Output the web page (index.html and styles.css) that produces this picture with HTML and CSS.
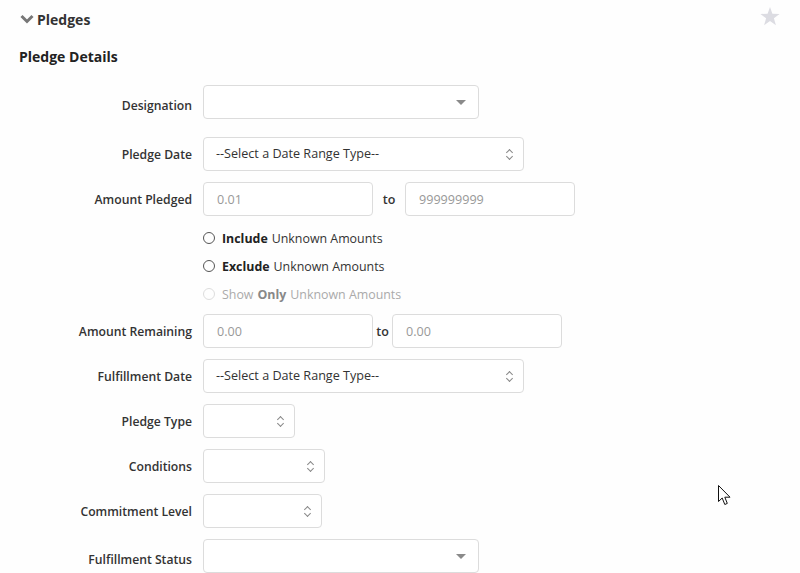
FILE: index.html
```html
<!DOCTYPE html>
<html lang="en">

<head>
    <meta charset="UTF-8">
    <meta name="viewport" content="width=device-width, initial-scale=1.0">
    <title>Pledges</title>
    <link rel="stylesheet" href="styles.css">
</head>

<body>

    <div class="panel">
        <div class="panel-head">
            <svg class="chevron" width="14" height="10" viewBox="0 0 14 10">
                <path d="M1.5 2 L7 7.5 L12.5 2" fill="none" stroke="#777" stroke-width="3" />
            </svg>
            <span class="panel-title">Pledges</span>
            <svg class="star" width="20" height="19" viewBox="0 0 20 19">
                <path d="M10 0 L12.4 6.8 L19.6 6.9 L13.9 11.3 L15.9 18.2 L10 14.1 L4.1 18.2 L6.1 11.3 L0.4 6.9 L7.6 6.8 Z" fill="#dcdce2" />
            </svg>
        </div>

        <h2 class="section-title">Pledge Details</h2>

        <div class="form">
            <div class="row row-first">
                <label class="label label-s2">Designation</label>
                <div class="select2 w-276"><span class="caret"></span></div>
            </div>

            <div class="row">
                <label class="label">Pledge Date</label>
                <div class="select w-321">--Select a Date Range Type--<span class="updown"></span></div>
            </div>

            <div class="row">
                <label class="label">Amount Pledged</label>
                <input class="input" type="text" placeholder="0.01">
                <span class="to to-wide">to</span>
                <input class="input" type="text" placeholder="999999999">
            </div>

            <div class="radios">
                <div class="radio"><span class="dot"></span><b>Include</b> Unknown Amounts</div>
                <div class="radio"><span class="dot"></span><b>Exclude</b> Unknown Amounts</div>
                <div class="radio disabled"><span class="dot"></span>Show <b>Only</b> Unknown Amounts</div>
            </div>

            <div class="row">
                <label class="label">Amount Remaining</label>
                <input class="input" type="text" placeholder="0.00">
                <span class="to">to</span>
                <input class="input" type="text" placeholder="0.00">
            </div>

            <div class="row">
                <label class="label">Fulfillment Date</label>
                <div class="select w-321">--Select a Date Range Type--<span class="updown"></span></div>
            </div>

            <div class="row">
                <label class="label">Pledge Type</label>
                <div class="select w-92"><span class="updown"></span></div>
            </div>

            <div class="row">
                <label class="label">Conditions</label>
                <div class="select w-122"><span class="updown"></span></div>
            </div>

            <div class="row">
                <label class="label">Commitment Level</label>
                <div class="select w-119"><span class="updown"></span></div>
            </div>

            <div class="row">
                <label class="label label-s2">Fulfillment Status</label>
                <div class="select2 w-276"><span class="caret"></span></div>
            </div>
        </div>
    </div>

    <!-- mouse pointer in the capture -->
    <svg class="cursor" width="14" height="22" viewBox="0 0 14 22">
        <path d="M0.5 0.5 L0.5 16.5 L4.2 13 L6.8 19.5 L9.3 18.4 L6.8 12.2 L12 12.2 Z" fill="#fff" stroke="#111" stroke-width="1" stroke-linejoin="round" />
    </svg>

</body>

</html>
```

FILE: styles.css
```css
/* reset START */
* {
    margin: 0;
    padding: 0;
    box-sizing: border-box;
}

body {
    font-family: "Open Sans", "Noto Sans", sans-serif;
    font-size: 12.5px;
    color: #333333;
    background-color: #fefefe;
    overflow: hidden;
}

/* reset END */

/* panel START */
.panel {
    position: relative;
    padding: 9px 0 0 19px;
}

.panel-head {
    display: flex;
    align-items: center;
    height: 20px;
}

.chevron {
    margin-left: 1px;
    margin-right: 3px;
}

.panel-title {
    font-size: 14px;
    font-weight: 700;
    color: #333333;
}

.star {
    position: absolute;
    top: 7px;
    right: 20px;
}

.section-title {
    margin-top: 17px;
    font-size: 14px;
    font-weight: 700;
    color: #222222;
    line-height: 22px;
}

/* panel END */

/* form START */
.form {
    margin-top: 17px;
    margin-left: -19px;
}

.row {
    display: flex;
    align-items: flex-start;
    margin-bottom: 11px;
}

.row-first {
    margin-bottom: 18px;
}

.label {
    width: 192px;
    margin-right: 11px;
    padding-top: 8px;
    line-height: 20px;
    text-align: right;
    font-size: 12.2px;
    font-weight: 600;
    color: #333333;
}

.label-s2 {
    padding-top: 11px;
}

.input,
.select,
.select2 {
    position: relative;
    height: 34px;
    border: 1px solid #dcdcdc;
    border-radius: 4px;
    background-color: #ffffff;
    font-family: inherit;
    font-size: 12.6px;
}

.input {
    width: 170px;
    padding: 0 13px;
    color: #333333;
    outline: none;
}

.input::placeholder {
    color: #999999;
}

.select {
    padding: 0 12px;
    line-height: 32px;
    color: #333333;
    white-space: nowrap;
}

.w-276 { width: 276px; }
.w-321 { width: 321px; }
.w-92 { width: 92px; }
.w-122 { width: 122px; }
.w-119 { width: 119px; }

.caret {
    position: absolute;
    right: 12px;
    top: 14px;
    border-left: 5px solid transparent;
    border-right: 5px solid transparent;
    border-top: 5px solid #8a8a8a;
}

.updown {
    position: absolute;
    right: 11px;
    top: 11px;
    width: 6px;
    height: 11px;
}

.updown::before,
.updown::after {
    content: "";
    position: absolute;
    left: 1px;
    width: 4px;
    height: 4px;
    border-left: 1px solid #888888;
    border-top: 1px solid #888888;
}

.updown::before {
    top: 1px;
    transform: rotate(45deg);
}

.updown::after {
    bottom: 1px;
    transform: rotate(225deg);
}

.to {
    width: 19px;
    padding-top: 8px;
    line-height: 20px;
    text-align: center;
    font-weight: 600;
}

.to-wide {
    width: 32px;
}

/* form END */

/* radios START */
.radios {
    margin: -3px 0 6px 203px;
}

.radio {
    display: flex;
    align-items: center;
    height: 28px;
    color: #333333;
    font-size: 12.4px;
    font-weight: 400;
}

.radio b {
    font-weight: 700;
    margin-right: 4px;
    color: #222222;
}

.radio.disabled b {
    margin-left: 4px;
    color: #888888;
}

.dot {
    width: 12px;
    height: 12px;
    margin-right: 7px;
    border: 1px solid #555555;
    border-radius: 50%;
}

.radio.disabled {
    color: #aaaaaa;
}

.radio.disabled .dot {
    border-color: #dddddd;
}

/* radios END */

/* cursor START */
.cursor {
    position: absolute;
    left: 718px;
    top: 485px;
}

/* cursor END */
```
